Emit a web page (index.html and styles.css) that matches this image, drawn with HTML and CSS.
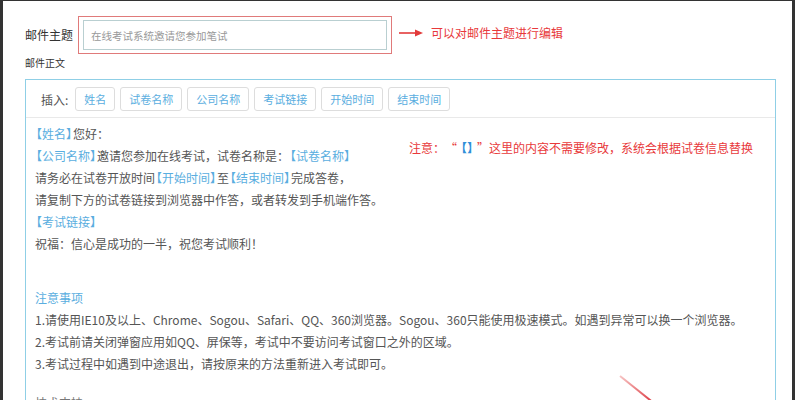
FILE: index.html
```html
<!DOCTYPE html>
<html lang="zh-CN">
<head>
<meta charset="utf-8">
<title>邮件模板</title>
<link rel="stylesheet" href="styles.css">
</head>
<body>
<div class="frame">
  <div class="subject">
    <span class="label">邮件主题</span>
    <div class="mark"><div class="input">在线考试系统邀请您参加笔试</div></div>
    <svg class="arrow" width="24" height="8" viewBox="0 0 24 8"><line x1="0" y1="4" x2="18" y2="4" stroke="#e23a3a" stroke-width="1.6"/><polygon points="16,0.5 24,4 16,7.5" fill="#e23a3a"/></svg>
    <span class="hint">可以对邮件主题进行编辑</span>
  </div>
  <div class="body-label">邮件正文</div>
  <div class="editor">
    <div class="toolbar">
      <span class="ins">插入:</span>
      <span class="btn">姓名</span>
      <span class="btn">试卷名称</span>
      <span class="btn">公司名称</span>
      <span class="btn">考试链接</span>
      <span class="btn">开始时间</span>
      <span class="btn">结束时间</span>
    </div>
    <div class="content">
      <p><span class="tag">【姓名】</span>您好：</p>
      <p><span class="tag">【公司名称】</span>邀请您参加在线考试，试卷名称是：<span class="tag">【试卷名称】</span></p>
      <p>请务必在试卷开放时间<span class="tag">【开始时间】</span>至<span class="tag">【结束时间】</span>完成答卷，</p>
      <p>请复制下方的试卷链接到浏览器中作答，或者转发到手机端作答。</p>
      <p><span class="tag">【考试链接】</span></p>
      <p>祝福：信心是成功的一半，祝您考试顺利！</p>
      <p class="notice-title">注意事项</p>
      <p>1.请使用IE10及以上、Chrome、Sogou、Safari、QQ、360浏览器。Sogou、360只能使用极速模式。如遇到异常可以换一个浏览器。</p>
      <p>2.考试前请关闭弹窗应用如QQ、屏保等，考试中不要访问考试窗口之外的区域。</p>
      <p>3.考试过程中如遇到中途退出，请按原来的方法重新进入考试即可。</p>
      <p class="more">技术支持：</p>
    </div>
    <div class="note">注意：<span class="quo">“</span><span class="q">【】</span><span class="quo">”</span>这里的内容不需要修改，系统会根据试卷信息替换</div>
  </div>
  <svg class="slash" width="50" height="40" viewBox="0 0 50 40">
    <defs><linearGradient id="g" x1="0" y1="0" x2="1" y2="1"><stop offset="0" stop-color="#e23a3a" stop-opacity="0.3"/><stop offset="1" stop-color="#d92f3a"/></linearGradient></defs>
    <line x1="5" y1="5" x2="40" y2="33" stroke="url(#g)" stroke-width="2"/>
  </svg>
</div>
</body>
</html>
```
FILE: styles.css
```css
html, body {
  margin: 0;
  height: 400px;
  overflow: hidden;
}
body {
  background: #333;
  font-family: "Noto Sans CJK SC", "Microsoft YaHei", sans-serif;
}
.frame {
  position: relative;
  box-sizing: border-box;
  margin: 1px 3px 0 3px;
  height: 399px;
  padding: 15px 0 0 22px;
  background: #fff;
  overflow: hidden;
}
.subject {
  display: flex;
  align-items: center;
}
.label {
  width: 48px;
  margin-right: 5px;
  font-size: 12px;
  line-height: 16px;
  color: #333;
  white-space: nowrap;
}
.mark {
  border: 1px solid #e07a7a;
  padding: 3px 4px;
}
.input {
  box-sizing: border-box;
  display: flex;
  align-items: center;
  width: 304px;
  height: 30px;
  padding-left: 7px;
  border: 1px solid #b9cfd1;
  font-size: 10.5px;
  color: #999;
}
.arrow {
  margin-left: 7px;
  margin-top: -4px;
}
.hint {
  margin-left: 8px;
  margin-top: -5px;
  font-size: 12px;
  color: #e8393b;
}
.body-label {
  margin: 2px 0 9px;
  font-size: 10px;
  line-height: 14px;
  color: #333;
}
.editor {
  position: relative;
  width: 751px;
  height: 400px;
  box-sizing: border-box;
  border: 1px solid #8fcfe6;
}
.toolbar {
  display: flex;
  align-items: center;
  padding: 7px 0 6px 15px;
  border-bottom: 1px solid #e9e9e9;
}
.ins {
  margin-right: 7px;
  font-size: 12px;
  color: #555;
}
.btn {
  box-sizing: border-box;
  height: 24px;
  margin-right: 5px;
  padding: 0 8px;
  border: 1px solid #ddd;
  border-radius: 3px;
  font-size: 11px;
  line-height: 22px;
  color: #5aaee0;
}
.content {
  padding: 5px 0 0 9px;
  font-size: 12px;
  color: #555;
}
.content p {
  margin: 0;
  line-height: 22px;
  white-space: nowrap;
}
.tag {
  color: #5aaee0;
  font-feature-settings: "halt";
  padding: 0 1px;
}
.content .notice-title {
  margin-top: 32px;
  color: #5aaee0;
}
.content .more {
  margin-top: 17px;
  color: #777;
}
.note {
  position: absolute;
  left: 383px;
  top: 60px;
  font-size: 12px;
  line-height: 16px;
  color: #e8393b;
  white-space: nowrap;
}
.quo {
  display: inline-block;
  width: 12px;
  text-align: center;
}
.q {
  display: inline-block;
  width: 20px;
  text-align: center;
  color: #2f8fd8;
  font-weight: bold;
  font-feature-settings: "halt";
}
.slash {
  position: absolute;
  left: 612px;
  top: 370px;
}
```
